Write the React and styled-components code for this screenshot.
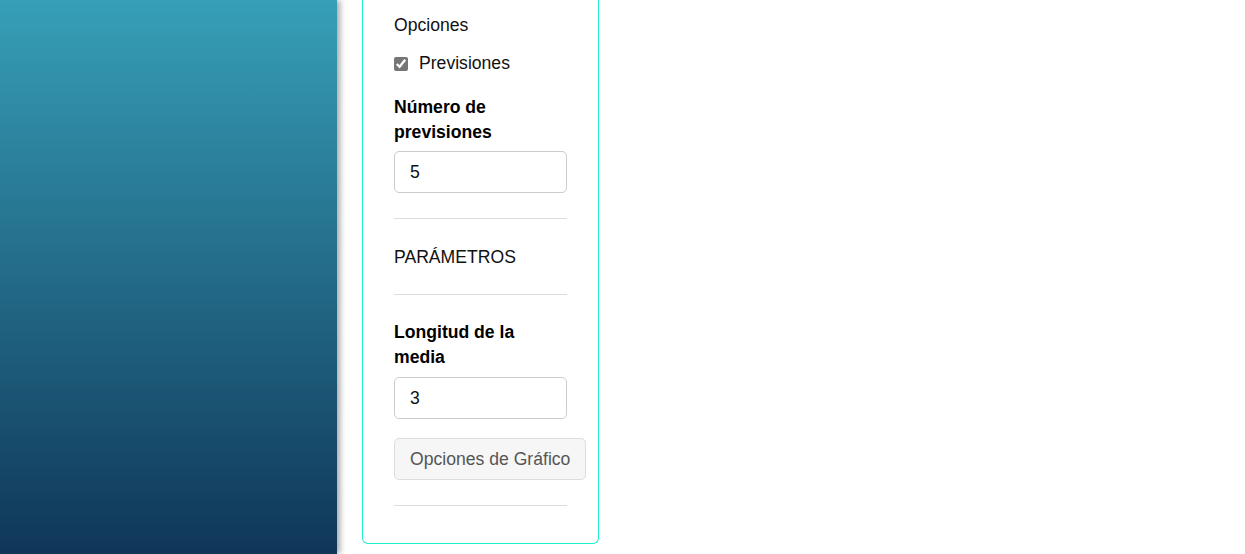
import React, { useState } from 'react';
import styled, { createGlobalStyle } from 'styled-components';

const GlobalStyle = createGlobalStyle`
  html, body {
    margin: 0;
    padding: 0;
    background: #fff;
    font-family: "Liberation Sans", Arial, sans-serif;
    overflow: hidden;
  }
`;

const Layout = styled.div`
  display: flex;
  height: 100vh;
`;

const Sidebar = styled.aside`
  flex: 0 0 337px;
  height: 100%;
  background: linear-gradient(to bottom, #379fb8 0%, #0f3658 100%);
  box-shadow: 3px 0 6px rgba(0, 0, 0, 0.35);
  position: relative;
  z-index: 1;
`;

const Main = styled.main`
  flex: 1;
  padding-left: 25px;
  display: flex;
  align-items: flex-start;
`;

const Panel = styled.section`
  width: 173px;
  padding: 13px 31px 37px;
  border: 1px solid #1cf0cf;
  border-top: none;
  border-radius: 0 0 6px 6px;
  font-size: 17.6px;
  line-height: 25px;
  color: #111;
`;

const Heading = styled.div`
  margin: 0;
`;

const CheckRow = styled.label`
  display: flex;
  align-items: center;
  margin-top: 13px;
  cursor: pointer;
`;

const Check = styled.input`
  width: 14px;
  height: 14px;
  margin: 0 11px 0 0;
  accent-color: #767676;
`;

const FieldLabel = styled.label`
  display: block;
  font-weight: bold;
  color: #000;
  margin-top: ${(p) => p.$top}px;
`;

const TextInput = styled.input`
  box-sizing: border-box;
  display: block;
  width: 173px;
  height: 42px;
  margin-top: ${(p) => p.$top}px;
  padding: 0 15px;
  border: 1px solid #cccccc;
  border-radius: 5px;
  font-family: inherit;
  font-size: 17.6px;
  color: #111;
  outline: none;
`;

const Divider = styled.hr`
  border: none;
  border-top: 1px solid #dcdcdc;
  margin: ${(p) => p.$top}px 0 0;
  height: 0;
`;

const SectionTitle = styled.div`
  margin-top: ${(p) => p.$top}px;
`;

const GhostButton = styled.button`
  box-sizing: border-box;
  display: block;
  height: 42px;
  margin-top: 19px;
  padding: 0 15px;
  background: #f6f6f6;
  border: 1px solid #dddddd;
  border-radius: 5px;
  font-family: inherit;
  font-size: 17.6px;
  color: #555;
  white-space: nowrap;
  cursor: pointer;
`;

export default function App() {
  const [forecast, setForecast] = useState(true);
  const [count, setCount] = useState('5');
  const [length, setLength] = useState('3');

  return (
    <>
      <GlobalStyle />
      <Layout>
        <Sidebar />
        <Main>
          <Panel>
            <Heading>Opciones</Heading>
            <CheckRow>
              <Check
                type="checkbox"
                checked={forecast}
                onChange={(e) => setForecast(e.target.checked)}
              />
              Previsiones
            </CheckRow>

            <FieldLabel $top={19}>Número de previsiones</FieldLabel>
            <TextInput $top={6} value={count} onChange={(e) => setCount(e.target.value)} />

            <Divider $top={25} />
            <SectionTitle $top={26}>PARÁMETROS</SectionTitle>
            <Divider $top={24} />

            <FieldLabel $top={25}>Longitud de la media</FieldLabel>
            <TextInput $top={7} value={length} onChange={(e) => setLength(e.target.value)} />

            <GhostButton>Opciones de Gráfico</GhostButton>
            <Divider $top={25} />
          </Panel>
        </Main>
      </Layout>
    </>
  );
}
